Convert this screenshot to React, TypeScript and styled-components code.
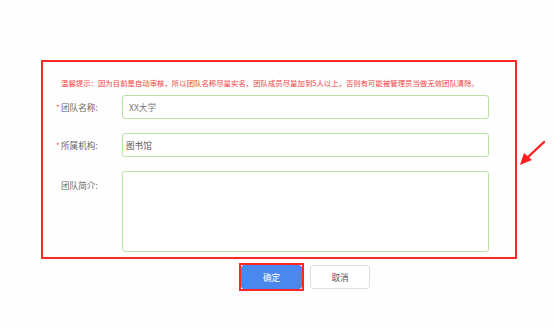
import React, { FunctionComponent } from "react";
import styled, { createGlobalStyle } from "styled-components";

const GlobalStyle = createGlobalStyle`
    html, body {
        margin: 0;
        padding: 0;
        background-color: #fefefe;
    }
    body {
        font-family: "Noto Sans CJK SC", "Noto Sans", "Liberation Sans", sans-serif;
    }
`;

const Page = styled.div`
    position: relative;
    width: 553px;
    height: 329px;
    padding-top: 60px;
    box-sizing: border-box;
`;

const Panel = styled.section`
    margin-left: 41px;
    width: 476px;
    height: 199px;
    box-sizing: border-box;
    border: 2px solid #ff2626;
    padding: 15px 26px 0 0;
    display: flex;
    flex-direction: column;
`;

const Notice = styled.p`
    margin: 0 0 7px 18px;
    font-size: 7.4px;
    line-height: 11px;
    color: #f0403f;
    white-space: nowrap;
`;

const Form = styled.div`
    display: grid;
    grid-template-columns: 79px 1fr;
    row-gap: 14px;
`;

const Label = styled.label<{ $top?: boolean }>`
    display: flex;
    align-items: center;
    padding-left: 13px;
    height: 24px;
    margin-top: ${(p) => (p.$top ? "2px" : "0")};
    font-size: 8.6px;
    color: #666;
    white-space: nowrap;
`;

const Star = styled.span<{ $show: boolean }>`
    display: inline-block;
    width: 5px;
    color: #f05a4a;
    font-size: 8px;
    visibility: ${(p) => (p.$show ? "visible" : "hidden")};
`;

const Input = styled.input<{ $pad?: number }>`
    height: 24px;
    box-sizing: border-box;
    border: 1px solid #b8e3a6;
    border-radius: 3px;
    padding: 0 0 0 ${(p) => p.$pad ?? 3}px;
    font-family: inherit;
    font-size: 8.6px;
    color: #555;
    background: #fff;
    outline: none;
    &::placeholder {
        color: #777;
    }
`;

const TextArea = styled.textarea`
    height: 81px;
    box-sizing: border-box;
    border: 1px solid #b8e3a6;
    border-radius: 3px;
    resize: none;
    background: #fff;
    outline: none;
`;

const Buttons = styled.div`
    display: flex;
    gap: 8px;
    margin: 6px 0 0 241px;
`;

const Button = styled.button<{ $primary?: boolean }>`
    width: ${(p) => (p.$primary ? "61px" : "60px")};
    height: 24px;
    box-sizing: border-box;
    border-radius: 3px;
    border: 1px solid ${(p) => (p.$primary ? "#4a88ee" : "#dcdcdc")};
    background: ${(p) => (p.$primary ? "#4a88ee" : "#fff")};
    color: ${(p) => (p.$primary ? "#fff" : "#555")};
    font-family: inherit;
    font-size: 8.6px;
    padding: 0;
`;

// red annotation frame drawn around the confirm button
const Highlight = styled.div`
    display: flex;
    margin: -2px;
    border: 2px solid #ff2626;
`;

const Arrow = styled.svg`
    position: absolute;
    left: 516px;
    top: 138px;
    width: 34px;
    height: 30px;
`;

const App: FunctionComponent = (): JSX.Element => {
    return (
        <Page>
            <GlobalStyle />
            <Panel>
                <Notice>
                    温馨提示：因为目前是自动审核，所以团队名称尽量实名，团队成员尽量加到5人以上，否则有可能被管理员当做无效团队清除。
                </Notice>
                <Form>
                    <Label>
                        <Star $show>*</Star>团队名称:
                    </Label>
                    <Input $pad={6} placeholder="XX大学" />
                    <Label>
                        <Star $show>*</Star>所属机构:
                    </Label>
                    <Input defaultValue="图书馆" />
                    <Label $top>
                        <Star $show={false}>*</Star>团队简介:
                    </Label>
                    <TextArea />
                </Form>
            </Panel>
            <Buttons>
                <Highlight>
                    <Button $primary>确定</Button>
                </Highlight>
                <Button>取消</Button>
            </Buttons>
            <Arrow viewBox="0 0 34 30">
                <line x1="28" y1="4" x2="11" y2="20" stroke="#ff2020" strokeWidth="2.4" strokeLinecap="round" />
                <polygon points="4,27 8,15 16,22" fill="#ff2020" />
            </Arrow>
        </Page>
    );
};

export default App;
